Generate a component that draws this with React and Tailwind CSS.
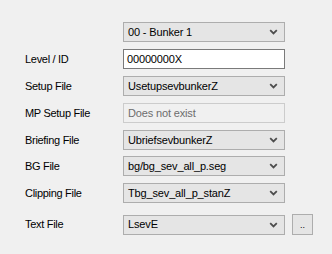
import React from "react";

const font = { fontFamily: '"Liberation Sans", Arial, sans-serif' };

function Chevron() {
  return (
    <svg width="9" height="6" viewBox="0 0 9 6" className="shrink-0">
      <path d="M1.2 1.2 L4.5 4.4 L7.8 1.2" fill="none" stroke="#4d4d4d" strokeWidth="1.8" />
    </svg>
  );
}

function Combo({ value }) {
  return (
    <div className="flex h-[20px] w-[162px] items-center justify-between border border-[#adadad] bg-[#e5e5e5] pl-[4px] pr-[6px] text-[11px] tracking-[-0.15px] text-black">
      <span>{value}</span>
      <Chevron />
    </div>
  );
}

function TextBox({ value, disabled }) {
  return (
    <div
      className={
        disabled
          ? "flex h-[20px] w-[162px] items-center border border-[#cccccc] bg-[#f0f0f0] pl-[4px] text-[11px] tracking-[-0.15px] text-[#6d6d6d]"
          : "flex h-[20px] w-[162px] items-center border border-[#7a7a7a] bg-white pl-[3px] text-[11px] tracking-[-0.15px] text-black"
      }
    >
      <span>{value}</span>
    </div>
  );
}

function Row({ label, children, className }) {
  return (
    <div className={"flex items-center " + (className || "")}>
      <div className="w-[98px] text-[11px] tracking-[-0.3px] text-black">{label}</div>
      {children}
    </div>
  );
}

export default function App() {
  return (
    <div className="h-[254px] w-[332px] overflow-hidden bg-[#f0f0f0] pl-[25px] pt-[22px]" style={font}>
      <div className="flex flex-col">
        <Row label="">
          <Combo value="00 - Bunker 1" />
        </Row>
        <Row label="Level / ID" className="mt-[7px]">
          <TextBox value="00000000X" />
        </Row>
        <Row label="Setup File" className="mt-[7px]">
          <Combo value="UsetupsevbunkerZ" />
        </Row>
        <Row label="MP Setup File" className="mt-[7px]">
          <TextBox value="Does not exist" disabled />
        </Row>
        <Row label="Briefing File" className="mt-[7px]">
          <Combo value="UbriefsevbunkerZ" />
        </Row>
        <Row label="BG File" className="mt-[6px]">
          <Combo value="bg/bg_sev_all_p.seg" />
        </Row>
        <Row label="Clipping File" className="mt-[7px]">
          <Combo value="Tbg_sev_all_p_stanZ" />
        </Row>
        <Row label="Text File" className="mt-[11px]">
          <Combo value="LsevE" />
          <div className="ml-[7px] flex h-[21px] w-[21px] items-end justify-center border border-[#adadad] bg-[#e5e5e5] pb-[4px] text-[9px] leading-none text-black">
            ..
          </div>
        </Row>
      </div>
    </div>
  );
}
